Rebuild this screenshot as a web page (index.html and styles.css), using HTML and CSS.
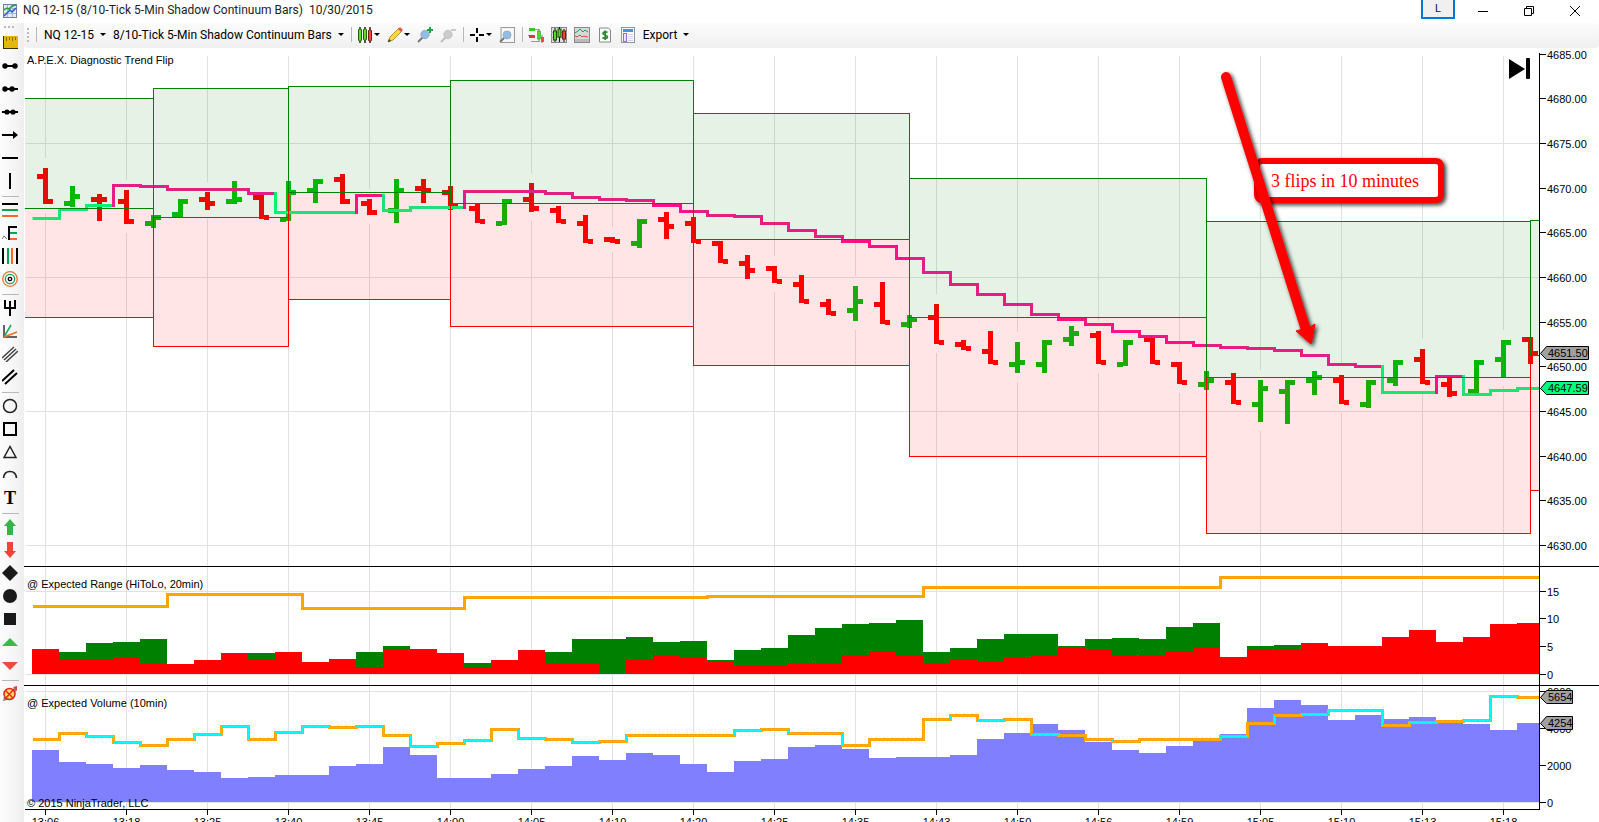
FILE: index.html
```html
<!DOCTYPE html>
<html lang="en">
<head>
<meta charset="utf-8">
<title>NQ 12-15 (8/10-Tick 5-Min Shadow Continuum Bars) 10/30/2015</title>
<link rel="stylesheet" href="styles.css">
</head>
<body>
<div class="window">
  <header class="titlebar">
    <svg class="app-icon" viewBox="0 0 14 14"><rect x=".5" y=".5" width="13" height="13" fill="#e4ebf6" stroke="#6f7fa8"/><path d="M1 4.500h12M1 9.500h12M4.500 1v12M9.500 1v12" stroke="#a9b6d6" fill="none"/><path d="M1 6l3-2 2 1 3-3 4-1" stroke="#2e9b3c" stroke-width="1.500" fill="none"/><path d="M1 12l3-3 3-3 2 2 4-4" stroke="#1c5fd0" stroke-width="1.500" fill="none"/></svg>
    <h1 class="title">NQ 12-15 (8/10-Tick 5-Min Shadow Continuum Bars)&nbsp; 10/30/2015</h1>
    <button class="link-button" type="button">L</button>
    <button class="win-button" type="button" aria-label="Minimize"><svg viewBox="0 0 12 12"><path d="M1 6.500h10"/></svg></button>
    <button class="win-button" type="button" aria-label="Restore"><svg viewBox="0 0 12 12"><path d="M1.500 3.500h7v7h-7zM3.500 3.500v-2h7v7h-2"/></svg></button>
    <button class="win-button" type="button" aria-label="Close"><svg viewBox="0 0 12 12"><path d="M1 1l10 10M11 1L1 11"/></svg></button>
  </header>

  <nav class="drawing-tools" aria-label="Drawing tools">
    <span class="grip-row"></span>
    <button type="button" aria-label="Ruler"><svg viewBox="0 0 16 16"><rect x="1" y="1" width="15" height="13" fill="#e3b80d"/><path d="M1.500 1v13M1 13.500h15" stroke="#3a3000"/><path d="M4.500 2v4M7.500 2v3M10.500 2v4M13.500 2v3" stroke="#8b7000"/></svg></button>
    <button type="button" aria-label="Line"><svg viewBox="0 0 16 16"><path d="M2 8h12" stroke="#000" stroke-width="2"/><circle cx="3" cy="8" r="2.700"/><circle cx="13" cy="8" r="2.700"/></svg></button>
    <button type="button" aria-label="Ray"><svg viewBox="0 0 16 16"><path d="M2 8h14" stroke="#000" stroke-width="2"/><circle cx="3" cy="8" r="2.700"/><circle cx="10" cy="8" r="2.700"/></svg></button>
    <button type="button" aria-label="Extended line"><svg viewBox="0 0 16 16"><path d="M0 8h16" stroke="#000" stroke-width="2"/><circle cx="5" cy="8" r="2.600"/><circle cx="11" cy="8" r="2.600"/></svg></button>
    <button type="button" aria-label="Arrow line"><svg viewBox="0 0 16 16"><path d="M0 8h13" stroke="#000" stroke-width="2"/><path d="M11 4l5 4-5 4z"/></svg></button>
    <button type="button" aria-label="Horizontal line"><svg viewBox="0 0 16 16"><path d="M0 8h16" stroke="#000" stroke-width="2"/></svg></button>
    <button type="button" aria-label="Vertical line"><svg viewBox="0 0 16 16"><path d="M8 0v16" stroke="#000" stroke-width="2"/></svg></button>
    <hr>
    <button type="button" aria-label="Fibonacci retracements"><svg viewBox="0 0 16 16"><path d="M0 2h16" stroke="#000" stroke-width="2"/><path d="M0 8h16" stroke="#00a651" stroke-width="2"/><path d="M0 14h16" stroke="#f36c21" stroke-width="2"/></svg></button>
    <button type="button" aria-label="Fibonacci extensions"><svg viewBox="0 0 16 16"><path d="M15 2H7v13" stroke="#000" stroke-width="2" fill="none"/><path d="M8 8h7" stroke="#00a651" stroke-width="2"/><path d="M8 14h7" stroke="#f36c21" stroke-width="2"/><path d="M0 14l2-3 3 3" stroke="#777" fill="none"/></svg></button>
    <button type="button" aria-label="Fibonacci time"><svg viewBox="0 0 16 16"><path d="M1 0v16M15 0v16" stroke="#000" stroke-width="2"/><path d="M6 0v16" stroke="#00a651" stroke-width="2"/><path d="M10 0v16" stroke="#f36c21" stroke-width="2"/></svg></button>
    <button type="button" aria-label="Fibonacci circle"><svg viewBox="0 0 16 16" fill="none"><circle cx="8" cy="8" r="7.300" stroke="#e8743a" stroke-width="1.300"/><circle cx="8" cy="8" r="4.700" stroke="#18a85c" stroke-width="1.300"/><circle cx="8" cy="8" r="1.700" stroke="#000" stroke-width="1.300"/></svg></button>
    <hr>
    <button type="button" aria-label="Pitchfork"><svg viewBox="0 0 16 16"><path d="M3 0v8h10V0M8 1v15" stroke="#000" stroke-width="2" fill="none"/></svg></button>
    <button type="button" aria-label="Gann fan"><svg viewBox="0 0 16 16"><path d="M2 2v12h13" stroke="#333" stroke-width="1.500" fill="none"/><path d="M2 14L9 2" stroke="#18a85c" stroke-width="1.500"/><path d="M2 14l13-5" stroke="#f36c21" stroke-width="1.500"/></svg></button>
    <button type="button" aria-label="Regression channel"><svg viewBox="0 0 16 16"><path d="M0 12L12 1M2 14L14 3M4 16L16 5" stroke="#444" stroke-width="1.500"/></svg></button>
    <button type="button" aria-label="Trend channel"><svg viewBox="0 0 16 16"><path d="M0 12L12 1M3 15L15 4" stroke="#000" stroke-width="2"/></svg></button>
    <hr>
    <button type="button" aria-label="Ellipse"><svg viewBox="0 0 16 16"><circle cx="8" cy="8" r="6.500" fill="none" stroke="#222" stroke-width="1.500"/></svg></button>
    <button type="button" aria-label="Rectangle"><svg viewBox="0 0 16 16"><rect x="2" y="2" width="12" height="12" fill="none" stroke="#000" stroke-width="2"/></svg></button>
    <button type="button" aria-label="Triangle"><svg viewBox="0 0 16 16"><path d="M8 2.500L2 13.500h12z" fill="none" stroke="#222" stroke-width="1.500"/></svg></button>
    <button type="button" aria-label="Arc"><svg viewBox="0 0 16 16"><path d="M1.500 11C2 6 5 4.500 8 4.500S14 6 14.500 11" fill="none" stroke="#222" stroke-width="1.600"/></svg></button>
    <button type="button" class="text-tool">T</button>
    <hr>
    <button type="button" aria-label="Arrow up"><svg viewBox="0 0 16 16"><path d="M8 0l6 7h-3v9H5V7H2z" fill="#35b44a"/></svg></button>
    <button type="button" aria-label="Arrow down"><svg viewBox="0 0 16 16"><path d="M8 16l6-7h-3V0H5v9H2z" fill="#f04438"/></svg></button>
    <button type="button" aria-label="Diamond"><svg viewBox="0 0 16 16"><path d="M8 0l8 8-8 8-8-8z" fill="#1a1a1a"/></svg></button>
    <button type="button" aria-label="Dot"><svg viewBox="0 0 16 16"><circle cx="8" cy="8" r="7" fill="#1a1a1a"/></svg></button>
    <button type="button" aria-label="Square"><svg viewBox="0 0 16 16"><rect x="2" y="2" width="12" height="12" fill="#1a1a1a"/></svg></button>
    <button type="button" aria-label="Triangle up"><svg viewBox="0 0 16 16"><path d="M8 4l8 8H0z" fill="#3cb850"/></svg></button>
    <button type="button" aria-label="Triangle down"><svg viewBox="0 0 16 16"><path d="M8 13l8-8H0z" fill="#f04a3e"/></svg></button>
    <hr>
    <button type="button" aria-label="Remove drawings"><svg viewBox="0 0 16 16"><path d="M1 15l1-4 10-9 3 2-10 10z" fill="#8a7b62"/><circle cx="7.500" cy="8" r="5.500" fill="#ffd85a" stroke="#e22b22" stroke-width="1.600"/><path d="M4 5l7 7M11 4l-7 8" stroke="#e22b22" stroke-width="1.400"/><path d="M11 1l4-1v5z" fill="#d44"/></svg></button>
  </nav>

  <nav class="toolbar" aria-label="Chart toolbar">
    <span class="grip-col"></span><span class="sep first"></span>
    <button type="button" class="drop text">NQ 12-15<i></i></button>
    <button type="button" class="drop text">8/10-Tick 5-Min Shadow Continuum Bars<i></i></button>
    <span class="sep"></span>
    <button type="button" class="drop" aria-label="Chart style"><svg viewBox="0 0 16 16"><path d="M3 0v16M8 0v16M13 0v16" stroke="#222" stroke-width="1.500"/><rect x="1.500" y="2" width="3" height="12" rx="1" fill="#63dc24" stroke="#235e10"/><rect x="6.500" y="2" width="3" height="11" rx="1" fill="#63dc24" stroke="#235e10"/><rect x="11.500" y="3" width="3" height="11" rx="1" fill="#ee4a40" stroke="#7a1a18"/></svg><i></i></button>
    <button type="button" class="drop" aria-label="Draw"><svg viewBox="0 0 16 16"><path d="M1 15l2-5L12 1l3 3-9 9z" fill="#ffd83a" stroke="#a67c14" stroke-width=".8"/><path d="M11 2l2-2 3 3-2 2z" fill="#e8554f"/><path d="M1 15l1-3 2 2z" fill="#333"/></svg><i></i></button>
    <button type="button" aria-label="Zoom in"><svg viewBox="0 0 16 16"><path d="M1 15l5-5" stroke="#777" stroke-width="2"/><circle cx="8" cy="7.500" r="4.200" fill="#8dbde8" stroke="#a5adb5"/><path d="M13 0v6M10 3h6" stroke="#18a53a" stroke-width="2"/></svg></button>
    <button type="button" aria-label="Zoom out" disabled><svg viewBox="0 0 16 16"><path d="M1 15l5-5" stroke="#bbb" stroke-width="2"/><circle cx="8" cy="7.500" r="4.200" fill="#ccc" stroke="#c4c4c4"/><path d="M11 3h5" stroke="#bbb" stroke-width="1.500"/></svg></button>
    <span class="sep"></span>
    <button type="button" class="drop" aria-label="Cursor"><svg viewBox="0 0 16 16"><path d="M8 1v5M8 10v5M1 8h5M10 8h5" stroke="#000" stroke-width="2"/></svg><i></i></button>
    <button type="button" aria-label="Data box"><svg viewBox="0 0 16 16"><rect x="2" y=".5" width="13.500" height="15" fill="#f6f6f6" stroke="#999"/><path d="M1 15l5-5" stroke="#777" stroke-width="2"/><circle cx="8" cy="8" r="4" fill="#8dbde8" stroke="#a5adb5"/></svg></button>
    <span class="sep"></span>
    <button type="button" aria-label="Chart trader"><svg viewBox="0 0 16 16"><path d="M3 2.500h8M0 8.500h5M3 14.500h8" stroke="#999"/><rect x="1" y="1" width="6" height="3" fill="#35c828"/><rect x="1" y="8" width="6" height="3" fill="#e03a30"/><path d="M11 2v13M14 8v8" stroke="#777"/><rect x="9.500" y="4" width="3" height="8" fill="#58d822" stroke="#2b8510" stroke-width=".5"/><rect x="13" y="10" width="3" height="5" fill="#ee4a40"/></svg></button>
    <button type="button" aria-label="Data series"><svg viewBox="0 0 16 16"><rect x=".5" y=".5" width="15" height="15" fill="#ddd" stroke="#888"/><path d="M0 5.500h16M0 10.500h16" stroke="#aaa"/><path d="M4 1v14M8.500 0v15M13 2v13" stroke="#111"/><rect x="2.500" y="4" width="3" height="9" fill="#58dc22" stroke="#174a09"/><rect x="7" y="2" width="3" height="8" fill="#58dc22" stroke="#174a09"/><rect x="11.500" y="4" width="3" height="8" fill="#ee4438" stroke="#7a1a18"/></svg></button>
    <button type="button" aria-label="Indicators"><svg viewBox="0 0 16 16"><rect x=".5" y=".5" width="15" height="15" fill="#d8d8d8" stroke="#888"/><path d="M1 6l3-2 2-2 3 3 2-2 3 2" stroke="#1c9d5c" fill="none"/><path d="M1 9l2 1 3-2 2 2 2-1 4 1" stroke="#e0443c" fill="none"/><rect x="1" y="12" width="14" height="3" fill="#bbb"/></svg></button>
    <button type="button" aria-label="Strategies"><svg viewBox="0 0 16 16"><path d="M2.500 1h9l2 2v12h-11z" fill="#fdfdfd" stroke="#888"/><path d="M10.500 5.500C8.500 4 6 5 6 6.500s4.500 1.500 4.500 3.300S7.500 12 5.500 10.500M8.200 3.500v9.500" stroke="#2b8a2e" stroke-width="1.700" fill="none"/></svg></button>
    <button type="button" aria-label="Properties"><svg viewBox="0 0 16 16"><rect x="1.500" y=".5" width="13" height="15" fill="#fafafa" stroke="#8a96aa"/><rect x="3" y="2" width="10" height="3" fill="#3f97d3"/><rect x="3.500" y="6.500" width="3" height="8" fill="#efe4ff" stroke="#9a63ee"/><path d="M8 7.500h5M8 9.500h5M8 11.500h5M8 13.500h5" stroke="#d0d4e2"/></svg></button>
    <button type="button" class="drop text">Export<i></i></button>
  </nav>

  <main class="chart">
    <svg id="chart" viewBox="24 48 1575 774" preserveAspectRatio="xMinYMin meet" role="img" aria-label="NQ 12-15 chart"></svg>
  </main>
</div>
<script src="chart.js"></script>
</body>
</html>
```
FILE: styles.css
```css
* { box-sizing: border-box; }
html, body { height: 100%; }
body {
  margin: 0;
  overflow: hidden;
  background: #fff;
  color: #000;
  font-family: Roboto, "Noto Sans", sans-serif;
  font-size: 12px;
}
button {
  display: flex;
  align-items: center;
  padding: 0;
  border: 0;
  background: none;
  color: inherit;
  font: inherit;
}
.window {
  display: grid;
  grid-template: 23px 25px minmax(0, 1fr) / 24px minmax(0, 1fr);
  height: 100%;
}
.titlebar {
  grid-column: 1 / 3;
  display: flex;
  align-items: center;
  gap: 6px;
  padding: 0 4px 2px 3px;
}
.app-icon { width: 14px; height: 14px; }
.title {
  flex: 1;
  margin: 0;
  font-size: 12px;
  font-weight: 400;
  line-height: 21px;
  white-space: nowrap;
  color: #222;
}
.link-button {
  justify-content: center;
  align-self: flex-start;
  width: 34px;
  height: 19px;
  margin-right: 2px;
  border: 2px solid #0078d7;
  border-top: 0;
  background: #f0f0f0;
  font-size: 11px;
  color: #113;
}
.win-button {
  justify-content: center;
  width: 40px;
  height: 20px;
}
.win-button svg { width: 12px; height: 12px; fill: none; stroke: #000; }

.drawing-tools {
  grid-row: 2 / 4;
  display: flex;
  flex-direction: column;
  gap: 7px;
  padding: 3px 5px 0 2px;
  background: linear-gradient(90deg, #fdfdfd, #f3f3f3 75%, #eee);
}
.drawing-tools button { width: 16px; height: 16px; flex: none; justify-content: center; }
.drawing-tools svg, .toolbar svg { width: 16px; height: 16px; display: block; }
.drawing-tools hr {
  width: 100%;
  flex: none;
  height: 1px;
  margin: 0 0 -2px;
  border: 0;
  background: #b9b9b9;
}
.drawing-tools .text-tool {
  font-family: "Liberation Serif", serif;
  font-size: 18px;
  font-weight: 700;
}
.grip-row {
  height: 2px;
  width: 12px;
  margin: 0 2px;
  flex: none;
  background: repeating-linear-gradient(90deg, #bbb 0 2px, transparent 2px 4px);
}
.toolbar {
  display: flex;
  align-items: center;
  gap: 7px;
  padding: 0 0 2px 3px;
  background: linear-gradient(#fcfcfc, #f0f0f0);
  border-radius: 0 4px 4px 4px;
}
.grip-col {
  width: 2px;
  height: 14px;
  background: repeating-linear-gradient(#bbb 0 2px, transparent 2px 4px);
}
.sep { width: 1px; height: 15px; margin-right: -2px; background: #b9b9b9; }
.sep.first { margin-right: 0; }
.drop { gap: 1px; }
.drop.text { gap: 6px; white-space: nowrap; }
.drop i {
  border: 3px solid transparent;
  border-top-color: #000;
  border-bottom: 0;
}

.chart { min-height: 0; overflow: hidden; }
.chart svg { display: block; width: 100%; height: auto; }
.chart text { font-family: "Liberation Sans", Arial, sans-serif; font-size: 11px; fill: #000; }
.chart .callout-text { font-family: "Liberation Serif", serif; font-size: 18px; fill: #f00; }
.grid { stroke: #e1e1e1; fill: none; }
.axis { stroke: #000; fill: none; }
.bar-up { fill: #00c000; }
.bar-down { fill: #f00; }
.trend-up, .trend-down { fill: none; stroke-width: 3; }
.trend-up { stroke: #00ff7f; }
.trend-down { stroke: #ff1493; }
.zone-upper { fill: #008000; fill-opacity: .1; }
.zone-lower { fill: #f00; fill-opacity: .1; }
.edge-upper { fill: none; stroke: #008000; }
.edge-lower { fill: none; stroke: #f00; }
.range-high { fill: #008000; }
.range-low { fill: #f00; }
.volume { fill: #8080ff; }
.expected { fill: none; stroke: #ffa500; stroke-width: 3; }
.expected-core { fill: none; stroke: #0ff; stroke-dasharray: 3 1; }
.tag { fill: #a0a0a0; stroke: #000; }
.tag-trend { fill: #00ff7f; stroke: #000; }
.middle { text-anchor: middle; }
```
FILE: chart.js
```javascript
const LEFT = 32, STEP = 27, RIGHT = 1539;

// high, low, open, close, up(1)/down(0)
const bars = [
[168,204,176,201,0],[186,207,203,196,1],[194,221,199,199,0],[190,224,201,221,0],[215,228,223,217,1],
[199,217,214,201,1],[192,210,199,203,0],[181,204,201,199,1],[195,219,197,217,0],[181,221,219,192,1],
[179,203,190,181,1],[174,204,179,201,0],[199,215,203,212,0],[179,223,210,190,1],[179,203,188,190,0],
[186,210,192,205,0],[204,223,208,221,0],[199,225,223,201,1],[183,212,199,208,0],[206,223,210,221,0],
[215,243,223,241,0],[237,243,239,241,0],[219,248,243,221,1],[212,239,219,226,0],[217,243,223,241,0],
[241,263,243,261,0],[255,279,263,270,0],[266,283,268,281,0],[275,303,284,301,0],[299,315,304,313,0],
[286,321,310,301,1],[282,324,304,322,0],[315,328,324,319,1],[304,344,317,342,0],[340,350,344,348,0],
[331,364,351,362,0],[342,373,364,362,1],[340,373,364,342,1],[326,346,339,333,1],[331,364,335,362,0],
[340,366,364,342,1],[337,364,339,362,0],[362,384,364,382,0],[371,390,384,380,1],[373,404,382,402,0],
[380,422,404,388,1],[380,424,391,382,1],[371,395,380,377,1],[375,404,380,402,0],[380,408,404,382,1],
[360,386,380,362,1],[349,384,359,382,0],[377,397,384,393,0],[360,393,391,362,1],[340,377,359,342,1],
[337,364,339,353,0]];

const trend = [218,209,205,185,186,189,189,189,193,212,212,212,195,210,207,207,191,191,191,193,197,199,200,205,
211,215,216,223,230,236,241,246,258,272,284,294,304,314,319,324,331,336,342,345,347,348,350,355,364,366,392,392,376,394,390,388];
const trendUp = new Set([0,1,2,9,10,11,13,14,15,50,51,53,54,55]);

// left, right, top, middle, bottom
const zones = [[10,153,98,208,317],[153,288,88,217,346],[288,450,86,192,299],[450,693,80,203,326],
[693,909,113,239,365],[909,1206,178,317,456],[1206,1530,221,377,533],[1530,1560,220,355,490]];

const rangeLow = [649,660,660,657,664,664,660,653,660,652,662,659,667,649,649,653,668,660,650,664,664,673,659,655,657,
662,666,666,663,664,655,652,656,663,660,662,657,656,648,650,656,655,652,648,657,650,649,643,646,646,637,630,642,637,624,623];
const rangeHigh = {1:652,2:643,3:642,4:639,8:653,12:652,13:646,16:663,19:652,20:639,21:639,22:637,23:642,24:641,25:660,
26:650,27:648,28:635,29:628,30:624,31:623,32:620,33:652,34:648,35:639,36:634,37:634,38:646,39:639,40:638,41:639,42:627,43:623,45:646,46:645};
const rangeLine = [[0,606],[5,594],[10,608],[16,597],[25,596],[33,587],[44,577]];

const volume = [750,762,764,768,765,770,772,778,777,775,775,766,764,747,755,778,778,774,769,766,756,760,753,755,764,772,
761,759,747,745,749,758,757,757,755,739,733,724,730,742,750,753,746,741,734,708,700,705,720,715,719,717,723,724,730,723];
const volumeLine = [739,733,736,742,745,739,734,726,739,732,726,727,726,735,746,743,740,729,738,739,742,741,735,735,735,735,
730,729,733,733,745,739,739,719,715,720,719,734,735,739,741,739,739,739,736,723,715,714,710,710,725,722,721,720,696,697];

const times = ['13:06','13:18','13:25','13:40','13:45','14:00','14:05','14:10','14:20','14:25','14:35','14:43','14:50','14:56','14:59','15:05','15:10','15:13','15:18'];

const out = [];
const path = (cls, d) => out.push(`<path class="${cls}" d="${d}"/>`);
const rect = (cls, x, y, w, h) => out.push(`<rect class="${cls}" x="${x}" y="${y}" width="${w}" height="${h}"/>`);
const text = (x, y, s, cls = '') => out.push(`<text class="${cls}" x="${x}" y="${y}">${s}</text>`);
const left = i => LEFT + STEP * i;
const width = i => Math.min(STEP, RIGHT - left(i));

out.push(`<defs><clipPath id="plot"><rect x="25" y="50" width="${RIGHT - 25}" height="760"/></clipPath>
<filter id="shadow" x="-20%" y="-20%" width="150%" height="150%"><feDropShadow dx="2" dy="2" stdDeviation="2" flood-opacity=".8"/></filter></defs><g clip-path="url(#plot)">`);

// grid, left open around each bar it crosses
times.forEach((t, k) => {
  const x = 45.5 + 81 * k, [hi, lo] = bars[k * 3];
  path('grid', `M${x} 56V${hi - 10}M${x} ${lo + 9}V809`);
});
[143, 277, 411, 545, 591, 674, 691, 802].forEach(y => path('grid', `M26 ${y + .5}H${RIGHT}`));

bars.forEach(([hi, lo, o, c, up], i) => {
  const x = 43 + STEP * i;
  path(up ? 'bar-up' : 'bar-down', `M${x} ${hi}h5V${lo}h-5zM${x - 6} ${o - 2}h6v5h-6zM${x + 5} ${c - 2}h5v5h-5z`);
});

trend.forEach((y, i) => {
  const x = left(i) + .5, from = i ? trend[i - 1] : y;
  const start = i ? `M${x} ${from + (from < y ? -1 : 2)}V${y + .5}` : `M${x} ${y + .5}`;
  path(trendUp.has(i) ? 'trend-up' : 'trend-down', `${start}H${x + STEP + 1}`);
});

zones.forEach(([l, r, t, m, b]) => {
  rect('zone-upper', l + .5, t + .5, r - l, m - t);
  rect('zone-lower', l + .5, m + .5, r - l, b - m);
});
zones.forEach(([l, r, t, m, b]) => {
  rect('edge-lower', l + .5, m + .5, r - l, b - m);
  rect('edge-upper', l + .5, t + .5, r - l, m - t);
});

rangeLow.forEach((y, i) => {
  if (rangeHigh[i]) rect('range-high', left(i), rangeHigh[i], width(i), 674 - rangeHigh[i]);
  rect('range-low', left(i), y, width(i), 674 - y);
});
path('expected', rangeLine.map(([i, y]) => i ? `H${left(i) + .5}V${y + .5}` : `M33 ${y + .5}`).join('') + `H${RIGHT}`);

volume.forEach((y, i) => rect('volume', left(i), y, width(i), 802 - y));
const steps = volumeLine.map((y, i) => i ? `H${left(i) + .5}V${y + .5}` : `M33 ${y + .5}`).join('') + `H${RIGHT}`;
path('expected', steps);
path('expected-core', steps);
out.push('</g>');

path('axis', 'M24 566.5H1599M24 685.5H1599M25 809.5H1540M1539.5 53V810');
times.forEach((t, k) => {
  const x = 45.5 + 81 * k;
  path('axis', `M${x} 810v5`);
  text(x, 826, t, 'middle');
});
const scale = (y, label) => { path('axis', `M1540 ${y + .5}h6`); text(1547, y + 5, label); };
[54, 98, 143, 188, 232, 277, 322, 366, 411, 456, 500, 545].forEach((y, i) => scale(y, (4685 - 5 * i) + '.00'));
[[591, 15], [618, 10], [646, 5], [674, 0], [691, 6000], [728, 4000], [765, 2000], [802, 0]].forEach(a => scale(...a));

const tag = (cls, y, right, label) => {
  path(cls, `M1540.5 ${y + .5}L1546.5 ${y - 6.5}H${right + .5}V${y + 6.5}H1546.5z`);
  text(1548, y + 4, label);
};
tag('tag', 353, 1588, '4651.50');
tag('tag-trend', 388, 1588, '4647.59');
tag('tag', 697, 1572, '5654');
tag('tag', 723, 1572, '4254');

text(27, 64, 'A.P.E.X. Diagnostic Trend Flip');
text(27, 588, '@ Expected Range (HiToLo, 20min)');
text(27, 707, '@ Expected Volume (10min)');
text(27, 807, '© 2015 NinjaTrader, LLC');

out.push('<path d="M1509 59l16 10-16 10z"/><rect x="1526" y="58" width="4" height="21" rx="1"/>');
out.push(`<g filter="url(#shadow)"><rect x="1257" y="161" width="184" height="39" rx="5" fill="#fff" stroke="#f00" stroke-width="6"/></g>`);
text(1271, 187, '3 flips in 10 minutes', 'callout-text');
out.push('<g filter="url(#shadow)"><path d="M1226 77L1306 330" stroke="#f00" stroke-width="10" stroke-linecap="round"/><path d="M1296 331l7-2 7-2 5-3-4 20z" fill="#f00" stroke="#f00"/></g>');

document.getElementById('chart').innerHTML = out.join('');
```
